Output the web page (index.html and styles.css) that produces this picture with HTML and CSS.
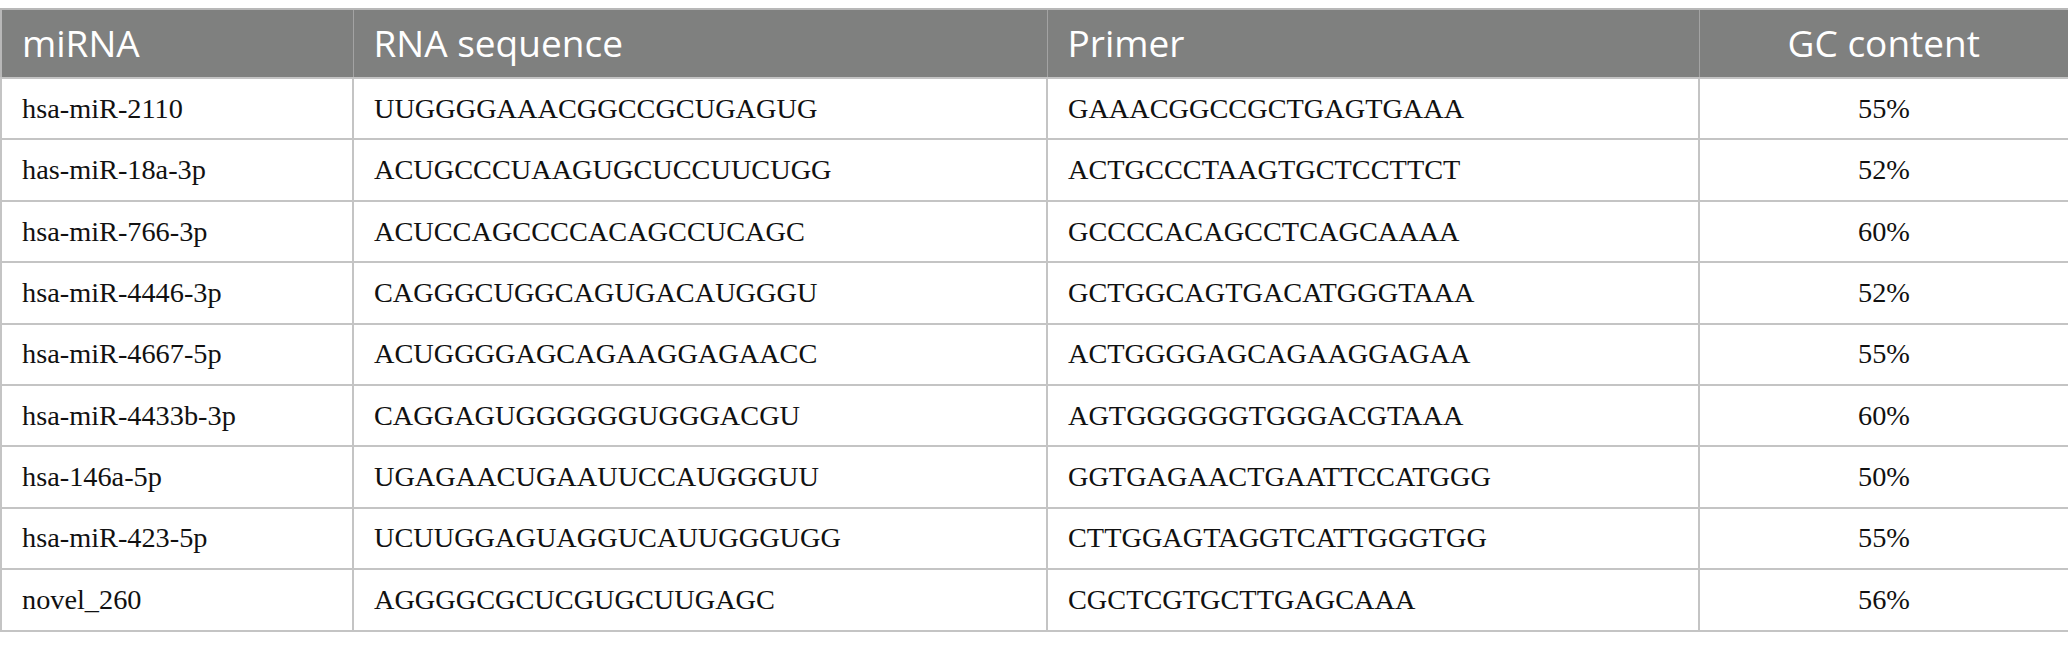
FILE: index.html
```html
<!DOCTYPE html>
<html>
<head>
<meta charset="utf-8">
<link rel="stylesheet" href="styles.css">
</head>
<body>
<table class="data">
  <colgroup>
    <col class="c1"><col class="c2"><col class="c3"><col class="c4">
  </colgroup>
  <thead>
    <tr><th>miRNA</th><th>RNA sequence</th><th>Primer</th><th class="center">GC content</th></tr>
  </thead>
  <tbody>
    <tr><td>hsa-miR-2110</td><td>UUGGGGAAACGGCCGCUGAGUG</td><td>GAAACGGCCGCTGAGTGAAA</td><td class="center">55%</td></tr>
    <tr><td>has-miR-18a-3p</td><td>ACUGCCCUAAGUGCUCCUUCUGG</td><td>ACTGCCCTAAGTGCTCCTTCT</td><td class="center">52%</td></tr>
    <tr><td>hsa-miR-766-3p</td><td>ACUCCAGCCCCACAGCCUCAGC</td><td>GCCCCACAGCCTCAGCAAAA</td><td class="center">60%</td></tr>
    <tr><td>hsa-miR-4446-3p</td><td>CAGGGCUGGCAGUGACAUGGGU</td><td>GCTGGCAGTGACATGGGTAAA</td><td class="center">52%</td></tr>
    <tr><td>hsa-miR-4667-5p</td><td>ACUGGGGAGCAGAAGGAGAACC</td><td>ACTGGGGAGCAGAAGGAGAA</td><td class="center">55%</td></tr>
    <tr><td>hsa-miR-4433b-3p</td><td>CAGGAGUGGGGGGUGGGACGU</td><td>AGTGGGGGGTGGGACGTAAA</td><td class="center">60%</td></tr>
    <tr><td>hsa-146a-5p</td><td>UGAGAACUGAAUUCCAUGGGUU</td><td>GGTGAGAACTGAATTCCATGGG</td><td class="center">50%</td></tr>
    <tr><td>hsa-miR-423-5p</td><td>UCUUGGAGUAGGUCAUUGGGUGG</td><td>CTTGGAGTAGGTCATTGGGTGG</td><td class="center">55%</td></tr>
    <tr><td>novel_260</td><td>AGGGGCGCUCGUGCUUGAGC</td><td>CGCTCGTGCTTGAGCAAA</td><td class="center">56%</td></tr>
  </tbody>
</table>
</body>
</html>
```
FILE: styles.css
```css
html, body {
  margin: 0;
  padding: 0;
  background: #ffffff;
}
body {
  padding-top: 8px;
}
.data {
  border-collapse: collapse;
  width: 2068px;
  table-layout: fixed;
  border: 2px solid #b8b8b8;
}
.c1 { width: 352px; }
.c2 { width: 694px; }
.c3 { width: 652px; }
.c4 { width: 370px; }
.data th {
  background: #7f807f;
  color: #ffffff;
  font-family: "Open Sans", "Noto Sans", sans-serif;
  font-weight: 400;
  font-size: 37px;
  line-height: 1.2;
  text-align: left;
  height: 67px;
  padding: 0 20px;
  border-left: 1px solid #a3a3a3;
  vertical-align: middle;
}
.data td {
  font-family: "Liberation Serif", "Times New Roman", serif;
  font-size: 28.3px;
  line-height: 1.2;
  color: #111111;
  height: 59.4px;
  padding: 0 20px;
  border: 2px solid #c4c4c4;
  vertical-align: middle;
}
.data .center {
  text-align: center;
}
```
